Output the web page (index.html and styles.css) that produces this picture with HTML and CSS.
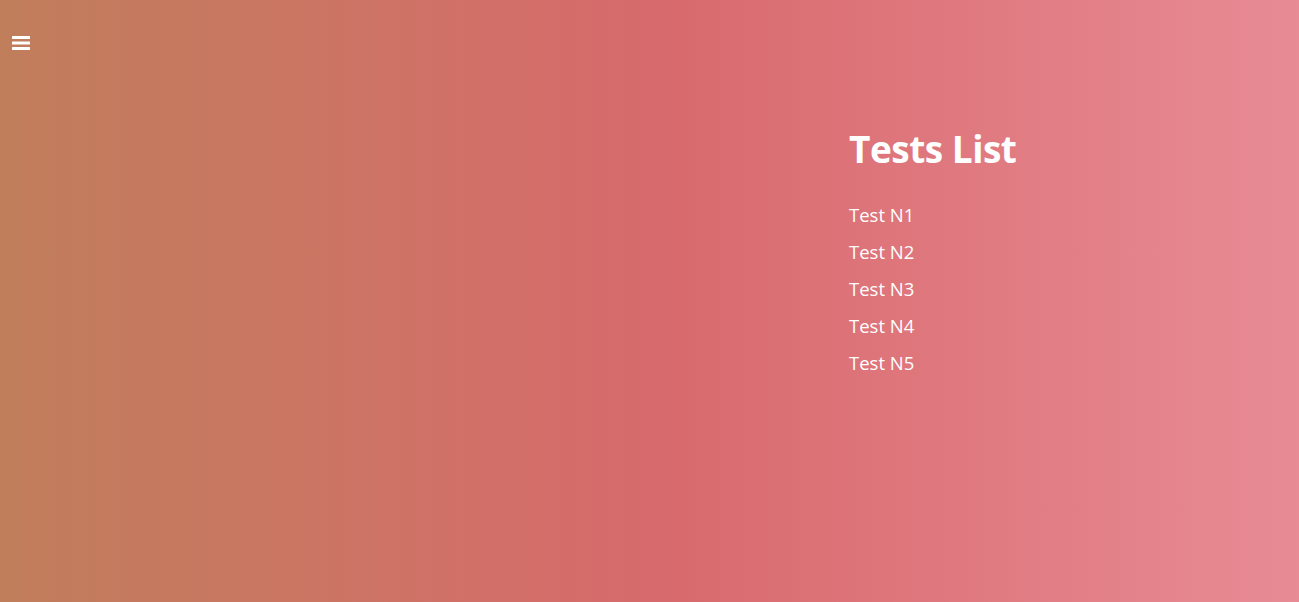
FILE: index.html
```html
<!DOCTYPE html>
<html>
<head>
<meta charset="utf-8">
<link rel="stylesheet" href="styles.css">
</head>
<body>
<div class="page">
  <header class="topbar">
    <button class="menu-btn" aria-label="Menu">
      <svg width="18" height="15" viewBox="0 0 18 15"><rect x="0" y="0" width="18" height="3" rx="0.5" fill="#fff"/><rect x="0" y="5.5" width="18" height="3" rx="0.5" fill="#fff"/><rect x="0" y="11" width="18" height="3" rx="0.5" fill="#fff"/></svg>
    </button>
  </header>
  <main class="content">
    <section class="tests">
      <h1 class="title">Tests List</h1>
      <ul class="list">
        <li>Test N1</li>
        <li>Test N2</li>
        <li>Test N3</li>
        <li>Test N4</li>
        <li>Test N5</li>
      </ul>
    </section>
  </main>
</div>
</body>
</html>
```
FILE: styles.css
```css
html, body {
  margin: 0;
  padding: 0;
  height: 100%;
}
body {
  font-family: "Open Sans", "Noto Sans", sans-serif;
  color: #fff;
  background: linear-gradient(to right, #c07e5b 0%, #d86a6d 52%, #e88b95 100%);
}
.page {
  min-height: 100%;
}
.topbar {
  padding: 36px 0 0 12px;
  height: 20px;
}
.menu-btn {
  border: 0;
  padding: 0;
  background: none;
  display: block;
  line-height: 0;
  cursor: pointer;
}
.content {
  display: flex;
  padding-left: 849px;
}
.title {
  margin: 68px 0 0;
  font-size: 37px;
  font-weight: 700;
  line-height: 50px;
  letter-spacing: -0.5px;
}
.list {
  list-style: none;
  margin: 22px 0 0;
  padding: 0;
  font-size: 18.5px;
}
.list li {
  line-height: 37px;
}
```
